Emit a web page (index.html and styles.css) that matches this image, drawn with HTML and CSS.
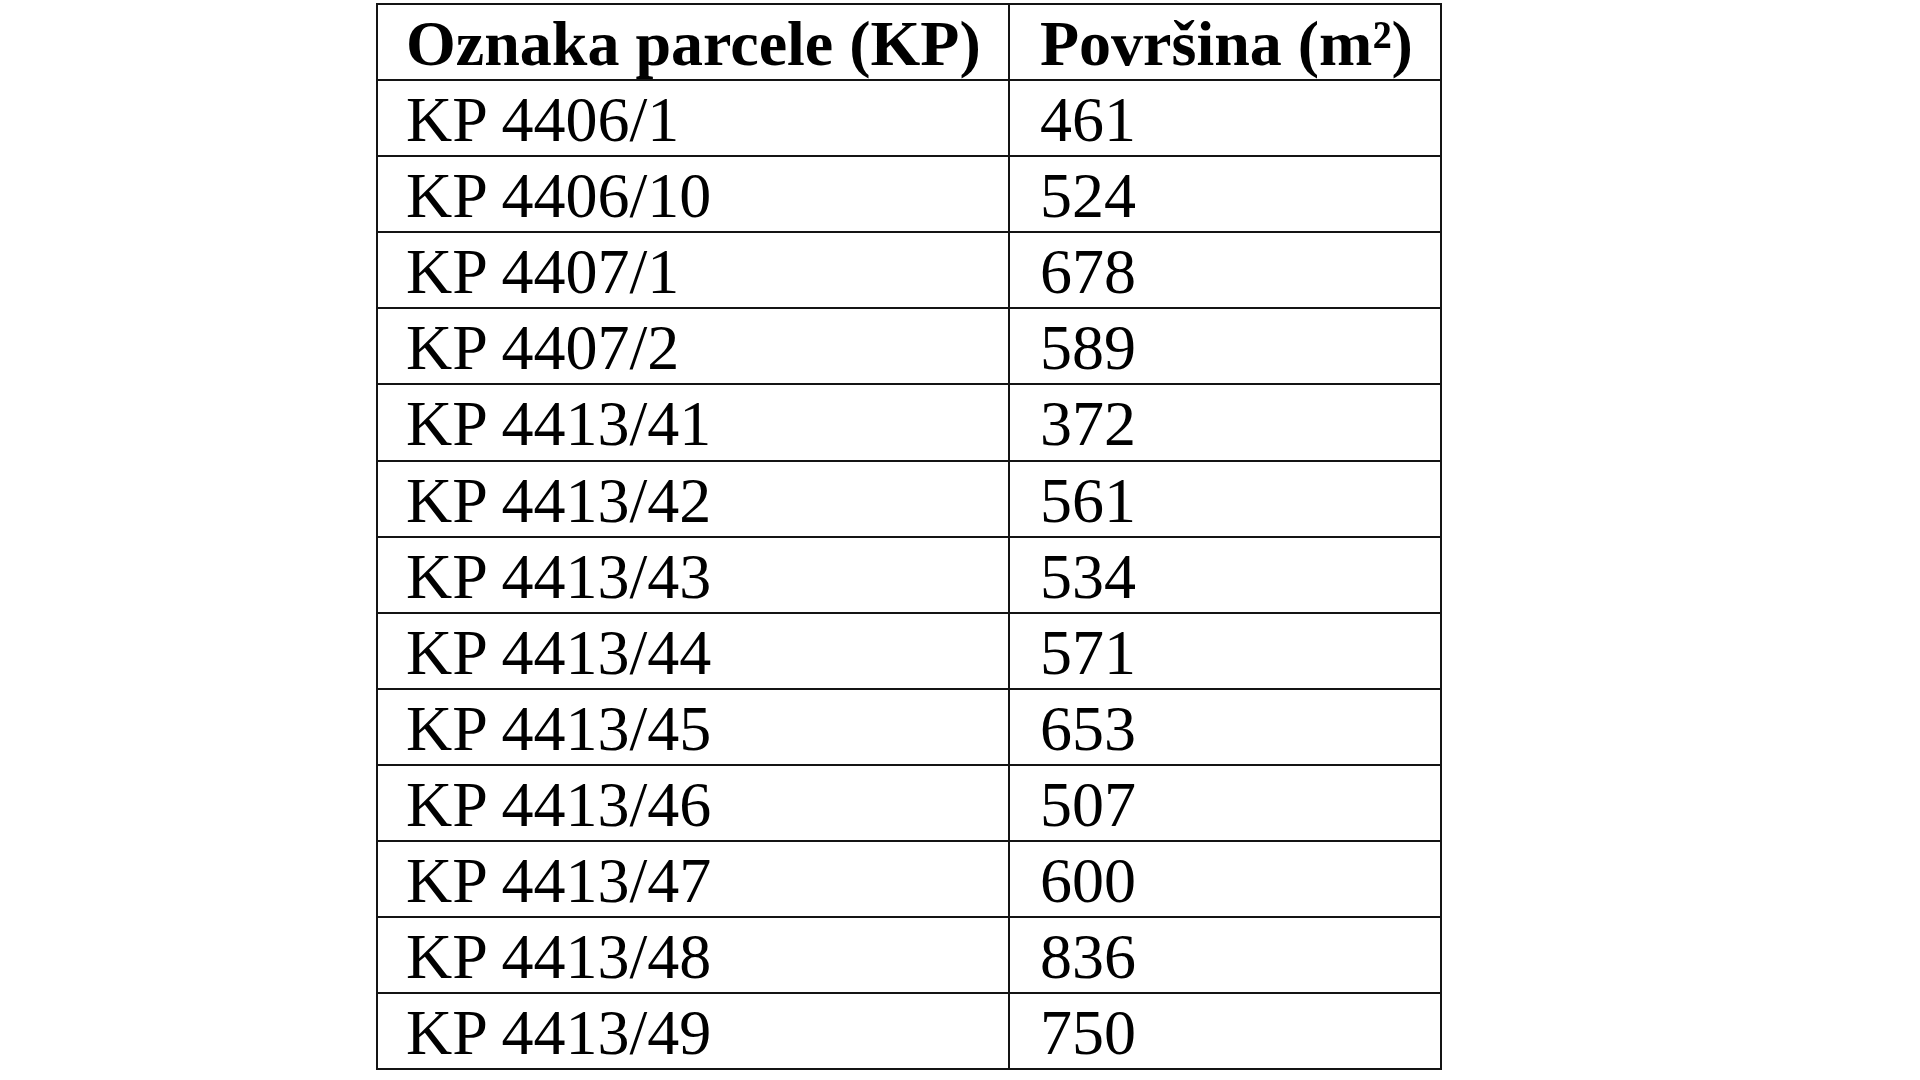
FILE: index.html
```html
<!DOCTYPE html>
<html lang="hr">
<head>
<meta charset="utf-8">
<title>Parcele</title>
<link rel="stylesheet" href="styles.css">
</head>
<body>
<table class="parcels">
  <colgroup>
    <col class="col-id">
    <col class="col-area">
  </colgroup>
  <thead>
    <tr><th>Oznaka parcele (KP)</th><th class="area">Površina (m²)</th></tr>
  </thead>
  <tbody>
    <tr><td>KP 4406/1</td><td class="area">461</td></tr>
    <tr><td>KP 4406/10</td><td class="area">524</td></tr>
    <tr><td>KP 4407/1</td><td class="area">678</td></tr>
    <tr><td>KP 4407/2</td><td class="area">589</td></tr>
    <tr><td>KP 4413/41</td><td class="area">372</td></tr>
    <tr><td>KP 4413/42</td><td class="area">561</td></tr>
    <tr><td>KP 4413/43</td><td class="area">534</td></tr>
    <tr><td>KP 4413/44</td><td class="area">571</td></tr>
    <tr><td>KP 4413/45</td><td class="area">653</td></tr>
    <tr><td>KP 4413/46</td><td class="area">507</td></tr>
    <tr><td>KP 4413/47</td><td class="area">600</td></tr>
    <tr><td>KP 4413/48</td><td class="area">836</td></tr>
    <tr><td>KP 4413/49</td><td class="area">750</td></tr>
  </tbody>
</table>
</body>
</html>
```

FILE: styles.css
```css
html, body {
  margin: 0;
  padding: 0;
  background: #ffffff;
}

body {
  padding: 3px 0 0 376px;
  font-family: "Liberation Serif", "Times New Roman", serif;
  color: #000;
}

.parcels {
  border-collapse: collapse;
  table-layout: fixed;
  width: 1064px;
  font-size: 64px;
}

.col-id { width: 632px; }
.col-area { width: 432px; }

.parcels th,
.parcels td {
  border: 2px solid #141414;
  padding: 4px 0 0 28px;
  line-height: 70.1px;
  text-align: left;
  vertical-align: top;
  white-space: nowrap;
}

.parcels .area {
  padding-left: 30px;
}

.parcels th {
  font-weight: bold;
}

.parcels td {
  font-weight: normal;
}
```
